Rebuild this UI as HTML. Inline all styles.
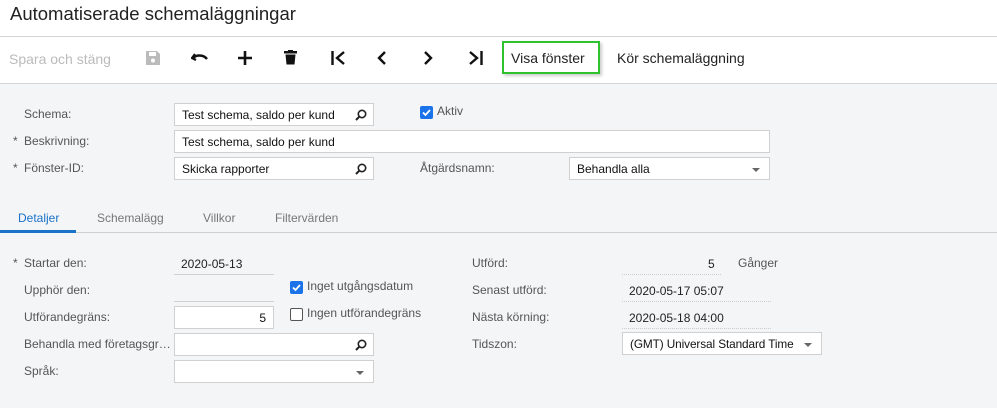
<!DOCTYPE html>
<html><head><style>
*{margin:0;padding:0;box-sizing:border-box}
body{width:997px;height:408px;background:#f4f5f7;font-family:"Liberation Sans",sans-serif;font-size:12px;color:#222;position:relative;overflow:hidden}
.a{position:absolute;white-space:nowrap}
.top{position:absolute;left:0;top:0;width:997px;height:84px;background:#fff;border-bottom:1px solid #d4d4d4}
.lbl{color:#555}
.box{position:absolute;background:#fff;border:1px solid #d0d0d0;height:23px;padding:4px 7px;font-size:12px;color:#111}
.mag{position:absolute;right:6px;top:5px}
.dd{position:absolute;right:9px;top:10px;width:0;height:0;border-left:4px solid transparent;border-right:4px solid transparent;border-top:4px solid #666}
.st{color:#555}
.cb{position:absolute;width:13px;height:13px;border-radius:2px}
.on{background:#1a73e8}
.off{background:#fff;border:1px solid #555}
.ul{position:absolute;height:1px;background:#d0d0d0}
.dot{position:absolute;height:1px;border-top:1px dotted #ccc}
</style></head><body>
<div class="top"></div>
<div class="a" style="left:10px;top:3px;font-size:18.5px;color:#222">Automatiserade schemaläggningar</div>
<div class="a" style="left:0;top:36px;width:997px;height:1px;background:#d4d4d4"></div>
<div class="a" style="left:9px;top:51px;font-size:14px;color:#bbb">Spara och stäng</div>
<svg class="a" style="left:146px;top:51px" width="14" height="14"><path d="M0 0h11l3 3v11H0z" fill="#bbb"/><rect x="3" y="1" width="7" height="4" fill="#fff"/><circle cx="7" cy="9.5" r="2" fill="#fff"/></svg>
<svg class="a" style="left:191px;top:51px" width="18" height="14"><path d="M4 3L1 7l4 2" fill="none" stroke="#111" stroke-width="2.2"/><path d="M2 7c3-3 10-4 14 1" fill="none" stroke="#111" stroke-width="2.4"/></svg>
<svg class="a" style="left:238px;top:51px" width="14" height="14"><path d="M7 0v14M0 7h14" stroke="#111" stroke-width="2.6"/></svg>
<svg class="a" style="left:284px;top:50px" width="13" height="15"><rect x="0" y="1" width="13" height="2.5" fill="#111"/><rect x="4" y="0" width="5" height="2" fill="#111"/><path d="M1.5 4.5h10l-1 10h-8z" fill="#111"/></svg>
<svg class="a" style="left:331px;top:51px" width="15" height="14"><path d="M1.5 0v14" stroke="#111" stroke-width="2.4"/><path d="M13 1L6 7l7 6" fill="none" stroke="#111" stroke-width="2.4"/></svg>
<svg class="a" style="left:377px;top:51px" width="10" height="14"><path d="M8 1L2 7l6 6" fill="none" stroke="#111" stroke-width="2.4"/></svg>
<svg class="a" style="left:423px;top:51px" width="10" height="14"><path d="M2 1l6 6-6 6" fill="none" stroke="#111" stroke-width="2.4"/></svg>
<svg class="a" style="left:468px;top:51px" width="15" height="14"><path d="M2 1l7 6-7 6" fill="none" stroke="#111" stroke-width="2.4"/><path d="M13.5 0v14" stroke="#111" stroke-width="2.4"/></svg>
<div class="a" style="left:502px;top:41px;width:98px;height:33px;border:2px solid #2ec22e;box-shadow:2px 2px 3px rgba(0,0,0,.2)"></div>
<div class="a" style="left:511px;top:50px;font-size:14px">Visa fönster</div>
<div class="a" style="left:617px;top:50px;font-size:14px">Kör schemaläggning</div>

<div class="a lbl" style="left:24px;top:107px">Schema:</div>
<div class="box" style="left:174px;top:103px;width:200px">Test schema, saldo per kund<svg class="mag" width="12" height="12"><circle cx="7" cy="5" r="3.7" fill="none" stroke="#222" stroke-width="1.6"/><path d="M4.3 7.7L1 11" stroke="#222" stroke-width="2"/></svg></div>
<div class="cb on" style="left:420px;top:106px"><svg width="13" height="13"><path d="M3 6.5l2.5 2.5 4.5-5" fill="none" stroke="#fff" stroke-width="1.8"/></svg></div>
<div class="a lbl" style="left:437px;top:104px">Aktiv</div>
<div class="a st" style="left:13px;top:134px">*</div><div class="a lbl" style="left:24px;top:134px">Beskrivning:</div>
<div class="box" style="left:174px;top:130px;width:596px">Test schema, saldo per kund</div>
<div class="a st" style="left:13px;top:161px">*</div><div class="a lbl" style="left:24px;top:161px">Fönster-ID:</div>
<div class="box" style="left:174px;top:157px;width:200px">Skicka rapporter<svg class="mag" width="12" height="12"><circle cx="7" cy="5" r="3.7" fill="none" stroke="#222" stroke-width="1.6"/><path d="M4.3 7.7L1 11" stroke="#222" stroke-width="2"/></svg></div>
<div class="a lbl" style="left:420px;top:161px">Åtgärdsnamn:</div>
<div class="box" style="left:569px;top:157px;width:201px">Behandla alla<div class="dd"></div></div>

<div class="a" style="left:0;top:232px;width:997px;height:1px;background:#d0d0d0"></div>
<div class="a" style="left:0;top:230px;width:76px;height:3px;background:#1a73c8"></div>
<div class="a" style="left:18px;top:211px;color:#1a73c8">Detaljer</div>
<div class="a" style="left:97px;top:211px;color:#777">Schemalägg</div>
<div class="a" style="left:203px;top:211px;color:#777">Villkor</div>
<div class="a" style="left:275px;top:211px;color:#777">Filtervärden</div>

<div class="a st" style="left:13px;top:256px">*</div><div class="a lbl" style="left:24px;top:256px">Startar den:</div>
<div class="a" style="left:181px;top:257px">2020-05-13</div><div class="ul" style="left:174px;top:274px;width:100px"></div>
<div class="a lbl" style="left:24px;top:283px">Upphör den:</div><div class="ul" style="left:174px;top:301px;width:100px"></div>
<div class="cb on" style="left:290px;top:281px"><svg width="13" height="13"><path d="M3 6.5l2.5 2.5 4.5-5" fill="none" stroke="#fff" stroke-width="1.8"/></svg></div>
<div class="a lbl" style="left:307px;top:279px">Inget utgångsdatum</div>
<div class="a lbl" style="left:24px;top:310px">Utförandegräns:</div>
<div class="box" style="left:174px;top:306px;width:100px;text-align:right">5</div>
<div class="cb off" style="left:290px;top:308px"></div>
<div class="a lbl" style="left:307px;top:306px">Ingen utförandegräns</div>
<div class="a lbl" style="left:24px;top:337px">Behandla med företagsgr…</div>
<div class="box" style="left:174px;top:333px;width:200px"><svg class="mag" width="12" height="12"><circle cx="7" cy="5" r="3.7" fill="none" stroke="#222" stroke-width="1.6"/><path d="M4.3 7.7L1 11" stroke="#222" stroke-width="2"/></svg></div>
<div class="a lbl" style="left:24px;top:364px">Språk:</div>
<div class="box" style="left:174px;top:360px;width:200px"><div class="dd"></div></div>

<div class="a lbl" style="left:472px;top:256px">Utförd:</div>
<div class="a" style="left:708px;top:257px">5</div><div class="a lbl" style="left:738px;top:256px">Gånger</div>
<div class="dot" style="left:622px;top:274px;width:99px"></div>
<div class="a lbl" style="left:472px;top:283px">Senast utförd:</div>
<div class="a" style="left:629px;top:284px">2020-05-17 05:07</div>
<div class="dot" style="left:622px;top:301px;width:149px"></div>
<div class="a lbl" style="left:472px;top:310px">Nästa körning:</div>
<div class="a" style="left:629px;top:311px">2020-05-18 04:00</div>
<div class="dot" style="left:622px;top:328px;width:149px"></div>
<div class="a lbl" style="left:472px;top:337px">Tidszon:</div>
<div class="box" style="left:622px;top:332px;width:200px;font-size:11.8px;letter-spacing:-0.1px">(GMT) Universal Standard Time<div class="dd"></div></div>
</body></html>
